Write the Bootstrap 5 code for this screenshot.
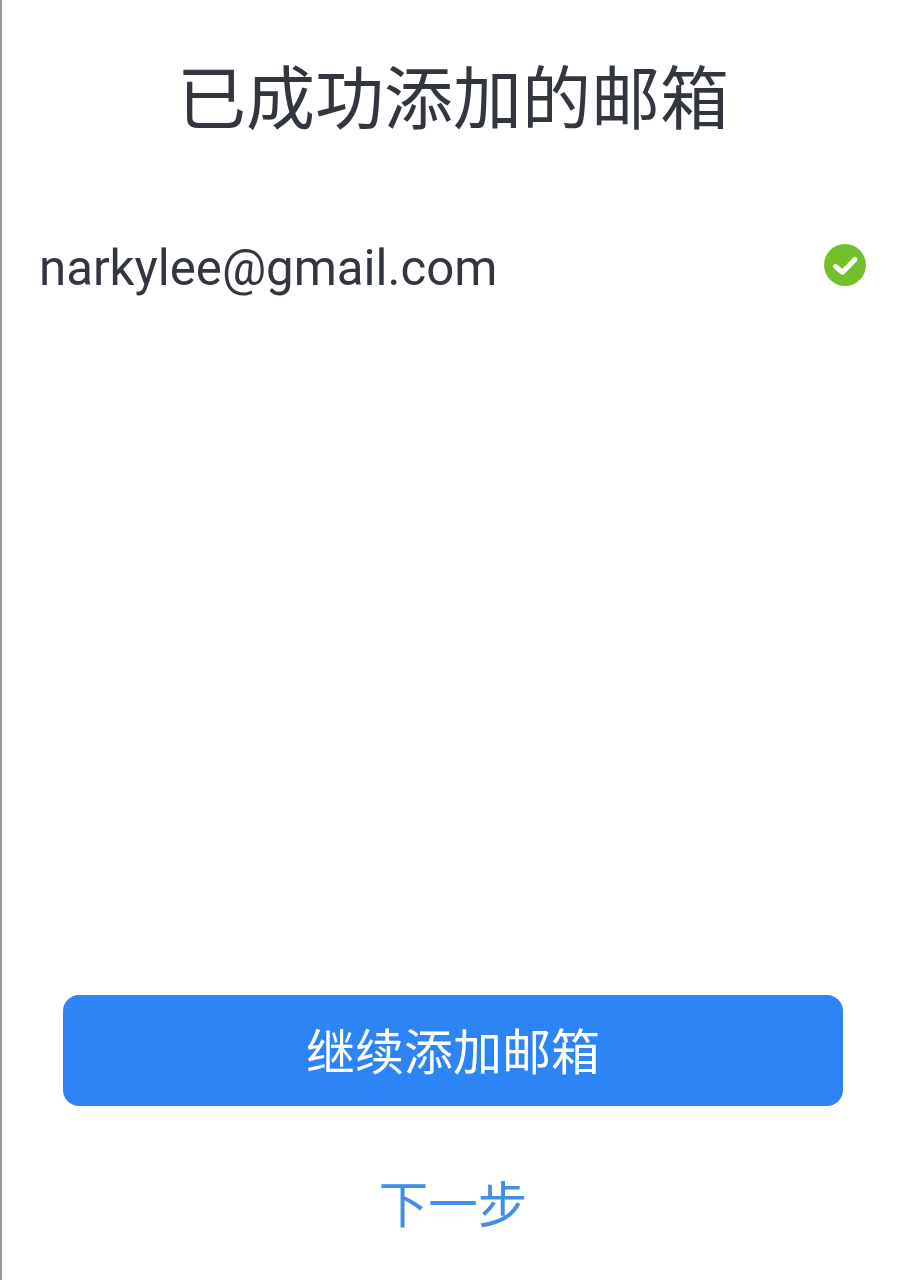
<!doctype html>
<html lang="zh"><head><meta charset="utf-8">
<link href="https://cdn.jsdelivr.net/npm/bootstrap@5.3.0/dist/css/bootstrap.min.css" rel="stylesheet">
<style>
html,body{height:100%}
body{font-family:Roboto,"Noto Sans CJK SC",sans-serif;background:#fff;color:#32363e;border-left:2px solid #999}
.screen{height:1280px;margin-left:-1px}
.title-txt{font-size:69px;line-height:90px;margin:0;padding-top:56px;font-weight:400;color:#32363e;text-align:center}
.mail-row{padding:92px 38px 0 38px}
.mail-txt{font-size:49.2px;line-height:60px;color:#32363e}
.check-ic{margin-top:-6px}
.main-btn{width:780px;height:111px;padding-top:11px;background:#2d84f4;border:0;border-radius:16px;color:#fff;font-size:49px;line-height:1}
.main-btn:hover{background:#2d84f4;color:#fff}
.next-link{font-size:49.5px;line-height:60px;color:#3f8fe8;text-decoration:none;margin-top:70px;margin-bottom:44px}
</style></head><body>
<div class="screen d-flex flex-column">
<h1 class="title-txt">已成功添加的邮箱</h1>
<div class="mail-row d-flex justify-content-between align-items-center">
<span class="mail-txt">narkylee@gmail.com</span>
<svg class="check-ic" width="44" height="44" viewBox="0 0 44 44"><circle cx="22" cy="22" r="21" fill="#72c12a"/><path d="M12.5 23.5l7 5.7L32 16.5" fill="none" stroke="#fff" stroke-width="5" stroke-linecap="round" stroke-linejoin="round"/></svg>
</div>
<div class="mt-auto d-flex flex-column align-items-center">
<button class="btn main-btn" type="button">继续添加邮箱</button>
<a class="next-link" href="#">下一步</a>
</div>
</div>
<script src="https://cdn.jsdelivr.net/npm/bootstrap@5.3.0/dist/js/bootstrap.bundle.min.js"></script>
</body></html>
